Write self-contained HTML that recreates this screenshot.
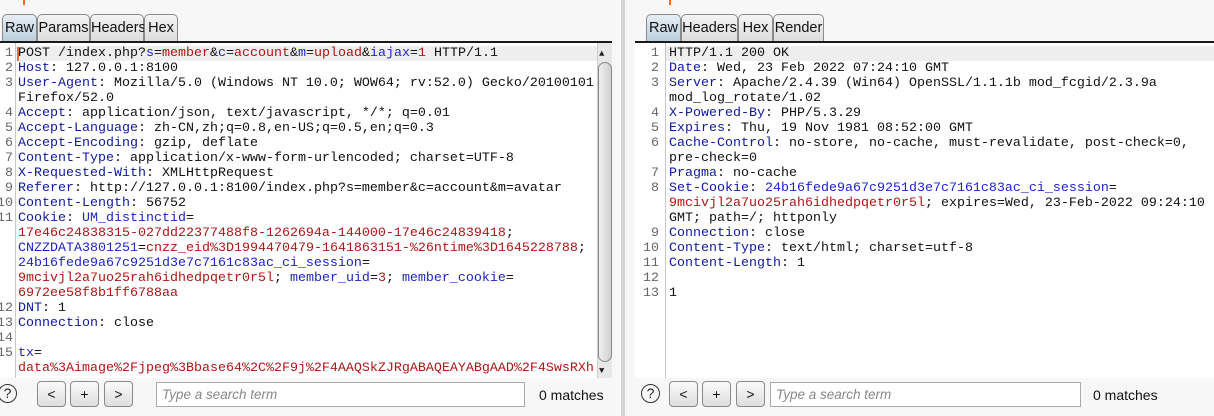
<!DOCTYPE html>
<html><head><meta charset="utf-8"><style>
*{margin:0;padding:0;box-sizing:border-box}
body{width:1214px;height:416px;background:#f7f7f7;position:relative;overflow:hidden;font-family:"Liberation Sans",sans-serif}
.abs{position:absolute}
.tab{position:absolute;top:14px;height:28px;border:1px solid #8a8a8a;border-bottom:none;border-radius:5px 5px 0 0;background:linear-gradient(#f4f4f4,#dcdcdc);font-size:14.5px;color:#111;text-align:center;line-height:26px}
.tab.sel{background:linear-gradient(#e6eef5,#b9cedd)}
.line{position:absolute;height:2px;background:#1a1a1a;top:41px}
.ed{position:absolute;background:#fff;font-family:"Liberation Mono",monospace;font-size:13.33px;line-height:15px;overflow:hidden}
.ln{position:absolute;color:#666;white-space:pre;text-align:right}
.tx{position:absolute;white-space:pre;color:#111}
.k{color:#0f1a9c}.r{color:#b01515}.b{color:#1e24c8}
.gut{position:absolute;top:0;bottom:0;width:1px;background:#c8c8c8}
.btn{position:absolute;top:381px;width:29px;height:26px;border:1px solid #8a8a8a;border-radius:4px;background:linear-gradient(#fafafa,#dedede);font-size:14px;text-align:center;line-height:24px;color:#111}
.inp{position:absolute;top:382px;height:25px;border:1px solid #aaa;background:#fff;font-size:13.5px;font-style:italic;color:#888;padding-left:5px;line-height:23px}
.help{position:absolute;top:384px;width:19px;height:19px;border:1.5px solid #333;border-radius:50%;font-size:14px;text-align:center;line-height:17px;color:#222}
.m{position:absolute;top:387px;font-size:14px;color:#111}
</style></head><body>
<div class="abs" style="left:23px;top:0;width:2px;height:5px;background:#f06a2c"></div>
<div class="abs" style="left:669px;top:0;width:2px;height:5px;background:#f06a2c"></div>

<div class="tab sel" style="left:2px;width:35px">Raw</div>
<div class="tab" style="left:37px;width:53px">Params</div>
<div class="tab" style="left:90px;width:54px">Headers</div>
<div class="tab" style="left:144px;width:34px">Hex</div>
<div class="line" style="left:0;width:612px"></div>

<div class="ed" style="left:0;top:43px;width:612px;height:335px">
<div class="abs" style="left:15px;top:3px;width:582px;height:15px;background:#eeeeee"></div>
<div class="abs" style="left:17px;top:4px;width:2px;height:14px;background:#f06a2c"></div>
<div class="gut" style="left:15px"></div>
<div class="ln" style="left:-5px;top:3px;width:18px">1
2
3

4
5
6
7
8
9
10
11





12
13
14
15</div>
<div class="tx" style="left:18px;top:3px">POST /index.php?<span class="b">s</span>=<span class="r">member</span>&amp;<span class="b">c</span>=<span class="r">account</span>&amp;<span class="b">m</span>=<span class="r">upload</span>&amp;<span class="b">iajax</span>=<span class="r">1</span> HTTP/1.1
<span class="k">Host</span>: 127.0.0.1:8100
<span class="k">User-Agent</span>: Mozilla/5.0 (Windows NT 10.0; WOW64; rv:52.0) Gecko/20100101
Firefox/52.0
<span class="k">Accept</span>: application/json, text/javascript, */*; q=0.01
<span class="k">Accept-Language</span>: zh-CN,zh;q=0.8,en-US;q=0.5,en;q=0.3
<span class="k">Accept-Encoding</span>: gzip, deflate
<span class="k">Content-Type</span>: application/x-www-form-urlencoded; charset=UTF-8
<span class="k">X-Requested-With</span>: XMLHttpRequest
<span class="k">Referer</span>: http://127.0.0.1:8100/index.php?s=member&amp;c=account&amp;m=avatar
<span class="k">Content-Length</span>: 56752
<span class="k">Cookie</span>: <span class="b">UM_distinctid</span>=
<span class="r">17e46c24838315-027dd22377488f8-1262694a-144000-17e46c24839418</span>;
<span class="b">CNZZDATA3801251</span>=<span class="r">cnzz_eid%3D1994470479-1641863151-%26ntime%3D1645228788</span>;
<span class="b">24b16fede9a67c9251d3e7c7161c83ac_ci_session</span>=
<span class="r">9mcivjl2a7uo25rah6idhedpqetr0r5l</span>; <span class="b">member_uid</span>=<span class="r">3</span>; <span class="b">member_cookie</span>=
<span class="r">6972ee58f8b1ff6788aa</span>
<span class="k">DNT</span>: 1
<span class="k">Connection</span>: close

<span class="b">tx</span>=
<span class="r">data%3Aimage%2Fjpeg%3Bbase64%2C%2F9j%2F4AAQSkZJRgABAQEAYABgAAD%2F4SwsRXh</span></div>
<div class="abs" style="left:597px;top:0;width:15px;height:335px;background:#e8e8e8;border-left:1px solid #ccc"></div>
<div class="abs" style="left:599px;top:4px;font-size:9px;color:#222">▲</div>
<div class="abs" style="left:598px;top:19px;width:14px;height:300px;border:1px solid #888;border-radius:7px;background:linear-gradient(90deg,#f0f0f0,#d0d0d0)"></div>
<div class="abs" style="left:599px;top:321px;font-size:9px;color:#222">▼</div>
</div>

<div class="abs" style="left:621px;top:0;width:4px;height:416px;background:#d4d4d4"></div>

<div class="tab sel" style="left:646px;width:35px">Raw</div>
<div class="tab" style="left:681px;width:57px">Headers</div>
<div class="tab" style="left:738px;width:35px">Hex</div>
<div class="tab" style="left:773px;width:51px">Render</div>
<div class="line" style="left:635px;width:579px"></div>

<div class="ed" style="left:635px;top:43px;width:579px;height:335px">
<div class="abs" style="left:30px;top:3px;width:549px;height:15px;background:#eeeeee"></div>
<div class="gut" style="left:30px"></div>
<div class="ln" style="left:6px;top:3px;width:18px">1
2
3

4
5
6

7
8


9
10
11
12
13</div>
<div class="tx" style="left:34px;top:3px">HTTP/1.1 200 OK
<span class="k">Date</span>: Wed, 23 Feb 2022 07:24:10 GMT
<span class="k">Server</span>: Apache/2.4.39 (Win64) OpenSSL/1.1.1b mod_fcgid/2.3.9a
mod_log_rotate/1.02
<span class="k">X-Powered-By</span>: PHP/5.3.29
<span class="k">Expires</span>: Thu, 19 Nov 1981 08:52:00 GMT
<span class="k">Cache-Control</span>: no-store, no-cache, must-revalidate, post-check=0,
pre-check=0
<span class="k">Pragma</span>: no-cache
<span class="k">Set-Cookie</span>: <span class="b">24b16fede9a67c9251d3e7c7161c83ac_ci_session</span>=
<span class="r">9mcivjl2a7uo25rah6idhedpqetr0r5l</span>; expires=Wed, 23-Feb-2022 09:24:10
GMT; path=/; httponly
<span class="k">Connection</span>: close
<span class="k">Content-Type</span>: text/html; charset=utf-8
<span class="k">Content-Length</span>: 1

1</div>
</div>

<div class="help" style="left:-2px">?</div>
<div class="btn" style="left:37px">&lt;</div>
<div class="btn" style="left:70px">+</div>
<div class="btn" style="left:104px">&gt;</div>
<div class="inp" style="left:156px;width:369px">Type a search term</div>
<div class="m" style="left:539px">0 matches</div>

<div class="help" style="left:641px">?</div>
<div class="btn" style="left:669px">&lt;</div>
<div class="btn" style="left:702px">+</div>
<div class="btn" style="left:736px">&gt;</div>
<div class="inp" style="left:770px;width:311px">Type a search term</div>
<div class="m" style="left:1093px">0 matches</div>
</body></html>
